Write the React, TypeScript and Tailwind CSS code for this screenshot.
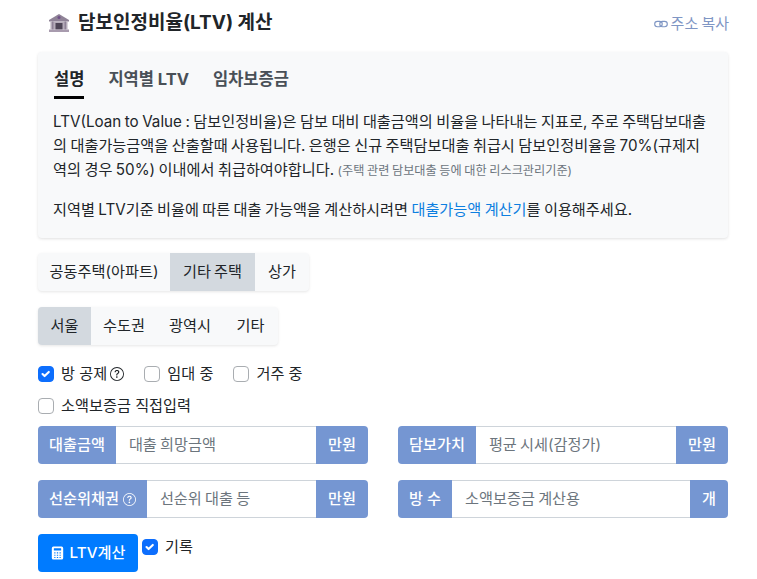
import React from "react";

const font = { fontFamily: 'Inter, "Noto Sans CJK KR", sans-serif' };

function Help({ className = "", size = 13 }: { className?: string; size?: number }) {
  return (
    <svg viewBox="0 0 16 16" width={size} height={size} fill="currentColor" className={className}>
      <path d="M8 15A7 7 0 1 1 8 1a7 7 0 0 1 0 14m0 1A8 8 0 1 0 8 0a8 8 0 0 0 0 16" />
      <path d="M5.255 5.786a.237.237 0 0 0 .241.247h.825c.138 0 .248-.113.266-.25.09-.656.54-1.134 1.342-1.134.686 0 1.314.343 1.314 1.168 0 .635-.374.927-.965 1.371-.673.489-1.206 1.06-1.168 1.987l.003.217a.25.25 0 0 0 .25.246h.811a.25.25 0 0 0 .25-.25v-.105c0-.718.273-.927 1.01-1.486.609-.463 1.244-.977 1.244-2.056 0-1.511-1.276-2.241-2.673-2.241-1.267 0-2.655.59-2.75 2.286m1.557 5.763c0 .533.425.927 1.01.927.609 0 1.028-.394 1.028-.927 0-.552-.42-.94-1.029-.94-.584 0-1.009.388-1.009.94" />
    </svg>
  );
}

function Check({ checked, label, extra }: { checked?: boolean; label: string; extra?: React.ReactNode }) {
  return (
    <label className="flex items-center text-[#212529] text-[15.2px] leading-[24px]">
      <span
        className={
          "w-4 h-4 rounded-[4px] mr-[7px] flex items-center justify-center border " +
          (checked ? "bg-[#0d6efd] border-[#0d6efd]" : "bg-white border-[#a9adb1]")
        }
      >
        {checked && (
          <svg viewBox="0 0 20 20" width="14" height="14">
            <path fill="none" stroke="#fff" strokeLinecap="round" strokeLinejoin="round" strokeWidth="3" d="m5 10 3 3 6-6" />
          </svg>
        )}
      </span>
      {label}
      {extra}
    </label>
  );
}

function Field({ label, placeholder, unit, help }: { label: string; placeholder: string; unit: string; help?: boolean }) {
  return (
    <div className="flex h-[38px] flex-1 text-[15.2px]">
      <span className="flex items-center px-[11px] rounded-l-[4px] bg-[#7596d2] text-white font-medium">
        {label}
        {help && <Help className="ml-[4px]" />}
      </span>
      <span className="flex-1 flex items-center px-[13px] bg-white border-y border-[#ced4da] text-[#6c757d] min-w-0 [word-spacing:-1px]">
        {placeholder}
      </span>
      <span className="flex items-center px-[12px] rounded-r-[4px] bg-[#7596d2] text-white font-medium">{unit}</span>
    </div>
  );
}

function Segment({ items, active }: { items: [string, string][]; active: number }) {
  return (
    <div className="flex w-fit h-[38px] rounded-[4px] bg-[#f8f9fa] shadow-[0_1px_3px_rgba(0,0,0,0.1)] text-[15.2px] [word-spacing:-1px] text-[#212529] overflow-hidden">
      {items.map(([t, w], i) => (
        <span key={t} className={"flex items-center justify-center " + w + (i === active ? " bg-[#d3d9df]" : "")}>
          {t}
        </span>
      ))}
    </div>
  );
}

export default function App() {
  return (
    <div className="w-[757px] h-[579px] overflow-hidden bg-white pl-[38px] pr-[29px]" style={font}>
      <div className="flex items-center justify-between h-[52px] pb-[6px]">
        <h1 className="flex items-center text-[19px] font-bold text-[#212529] pl-[10px]">
          <svg viewBox="0 0 22 20" width="22" height="20" className="mr-[8px]">
            <path d="M11 1 1 7v1.500h20V7z" fill="#8f8397" />
            <circle cx="11" cy="4.500" r="1.500" fill="#6f4f86" />
            <rect x="2.500" y="8.500" width="17" height="8" fill="#b6adba" />
            <rect x="4" y="8.500" width="1.500" height="8" fill="#8f8397" />
            <rect x="16.500" y="8.500" width="1.500" height="8" fill="#8f8397" />
            <rect x="7.500" y="10" width="7" height="6.500" fill="#4e4656" />
            <rect x="1" y="16.500" width="20" height="2.500" fill="#a89bae" />
          </svg>
          담보인정비율(LTV) 계산
        </h1>
        <span className="flex items-center text-[15px] [word-spacing:-1px] text-[#7f96c4] pt-[2px] -mr-[1px]">
          <svg viewBox="0 0 16 16" width="14" height="14" fill="none" stroke="currentColor" strokeWidth="1.3" className="mr-[3px]">
            <rect x="0.800" y="5" width="8.600" height="6.200" rx="3.100" />
            <rect x="6.600" y="5" width="8.600" height="6.200" rx="3.100" />
          </svg>
          주소 복사
        </span>
      </div>

      <div className="rounded-[4px] bg-[#f8f9fa] shadow-[0_1px_3px_rgba(0,0,0,0.12)] h-[186px] pl-[16px] pr-[19px]">
        <div className="flex gap-[24px] pt-[15px] text-[16.5px] font-bold h-[47px]">
          <span className="text-[#212529] border-b-[3px] border-black h-[32px]">설명</span>
          <span className="text-[#495057]">지역별 LTV</span>
          <span className="text-[#495057]">임차보증금</span>
        </div>
        <p className="mt-[11px] -ml-[1px] text-[15.2px] [word-spacing:-0.8px] leading-[24px] text-[#212529]">
          LTV(Loan to Value : 담보인정비율)은 담보 대비 대출금액의 비율을 나타내는 지표로, 주로 주택담보대출의 대출가능금액을 산출할때 사용됩니다. 은행은 신규 주택담보대출 취급시 담보인정비율을 70%(규제지역의 경우 50%) 이내에서 취급하여야합니다.{" "}
          <span className="text-[12.16px] text-[#6c757d]">(주택 관련 담보대출 등에 대한 리스크관리기준)</span>
        </p>
        <p className="mt-[15px] -ml-[1px] text-[15.2px] [word-spacing:-0.9px] leading-[24px] text-[#212529]">
          지역별 LTV기준 비율에 따른 대출 가능액을 계산하시려면 <span className="text-[#0d7fe0]">대출가능액 계산기</span>를 이용해주세요.
        </p>
      </div>

      <div className="mt-[15px]">
        <Segment items={[["공동주택(아파트)", "w-[132px]"], ["기타 주택", "w-[85px]"], ["상가", "w-[54px]"]]} active={1} />
      </div>
      <div className="mt-[16px]">
        <Segment items={[["서울", "w-[53px]"], ["수도권", "w-[66px]"], ["광역시", "w-[66px]"], ["기타", "w-[55px]"]]} active={0} />
      </div>

      <div className="mt-[17px] flex gap-[20px]">
        <Check checked label="방 공제" extra={<Help size={14} className="ml-[3px] text-[#212529]" />} />
        <Check label="임대 중" />
        <Check label="거주 중" />
      </div>
      <div className="mt-[8px]">
        <Check label="소액보증금 직접입력" />
      </div>

      <div className="mt-[8px] grid grid-cols-2 gap-x-[30px] gap-y-[16px]">
        <Field label="대출금액" placeholder="대출 희망금액" unit="만원" />
        <Field label="담보가치" placeholder="평균 시세(감정가)" unit="만원" />
        <Field label="선순위채권" placeholder="선순위 대출 등" unit="만원" help />
        <Field label="방 수" placeholder="소액보증금 계산용" unit="개" />
      </div>

      <div className="mt-[16px] flex items-start">
        <button className="flex items-center h-[38px] w-[100px] justify-center rounded-[4px] bg-[#007bff] text-white text-[15.2px] font-medium">
          <svg viewBox="0 0 16 16" width="13" height="14" fill="currentColor" className="mr-[6px]">
            <path d="M3 0a2 2 0 0 0-2 2v12a2 2 0 0 0 2 2h10a2 2 0 0 0 2-2V2a2 2 0 0 0-2-2zm1 2h8a.5.5 0 0 1 .5.5v2a.5.5 0 0 1-.5.5H4a.5.5 0 0 1-.5-.5v-2A.5.5 0 0 1 4 2m0 5h1.5v1.5H4zm3.2 0h1.6v1.5H7.2zm3.3 0H12v1.5h-1.5zM4 10h1.5v1.5H4zm3.2 0h1.6v1.5H7.2zm3.3 0H12v1.5h-1.5zM4 13h1.5v1.2H4zm3.2 0h1.6v1.2H7.2zm3.3 0H12v1.2h-1.5z" />
          </svg>
          LTV계산
        </button>
        <div className="ml-[4px] mt-[1px]">
          <Check checked label="기록" />
        </div>
      </div>
    </div>
  );
}
